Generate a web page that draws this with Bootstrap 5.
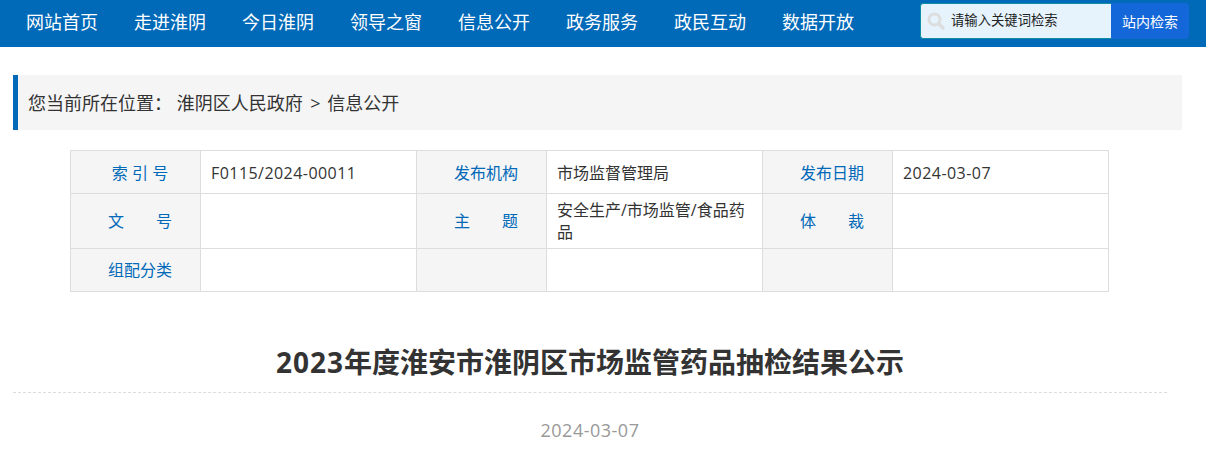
<!DOCTYPE html>
<html lang="zh">
<head>
<meta charset="utf-8">
<title>2023年度淮安市淮阴区市场监管药品抽检结果公示</title>
<link href="https://cdn.jsdelivr.net/npm/bootstrap@5.3.0/dist/css/bootstrap.min.css" rel="stylesheet">
<style>
body { font-family: "Open Sans", "Noto Sans CJK SC", sans-serif; background: #fff; color: #333; overflow: hidden; }
.top-bar { height: 47px; background: #0069b8; padding-left: 26px; padding-right: 17px; }
.top-links { gap: 36px; }
.top-links a { color: #fff; font-size: 18px; line-height: 45px; text-decoration: none; }
.search-box { width: 269px; height: 36px; margin-top: 3px; }
.search-field { width: 191px; height: 36px; background: #e6f3fd; border: 1px solid #0f8ea5; border-right: 0; border-radius: 3px 0 0 3px; padding-left: 6px; gap: 6px; font-size: 13.33px; color: #222; }
.search-go { width: 78px; height: 36px; padding: 0; background: #1467d8; border: 0; border-radius: 0 4px 4px 0; color: #fff; font-size: 14px; }
.crumb-bar { margin: 28px 24px 0 13px; height: 55px; background: #f5f5f5; border-left: 5px solid #0069b8; padding-left: 10px; font-size: 18px; line-height: 56px; color: #333; }
.crumb-sep { margin: 0 2px 0 3px; }
.meta-wrap { margin: 20px 98px 0 70px; }
.meta-grid { table-layout: fixed; width: 1038px; border-collapse: collapse; font-size: 16px; line-height: 22px; }
.meta-grid td { border: 1px solid #ddd; padding: 0 10px; color: #333; vertical-align: middle; }
.meta-grid .r1 td, .meta-grid .r3 td { height: 43px; }
.meta-grid .r1 td { padding-top: 1px; }
.meta-grid .r2 td { height: 55px; }
.meta-grid td.lab { background: #f5f5f5; color: #0069b8; text-align: center; white-space: pre; padding-left: 9px; padding-right: 0; }
.meta-grid td.num-val { letter-spacing: .45px; }
.doc-title { margin: 50px 39px 0 13px; padding-bottom: 10px; border-bottom: 1px dashed #ddd; font-size: 28px; line-height: 40px; font-weight: 700; color: #333; text-align: center; }
.yr { letter-spacing: 1px; }
.doc-date { margin: 25px 39px 0 13px; font-size: 18px; line-height: 24px; color: #999; text-align: center; letter-spacing: .5px; }
</style>
</head>
<body>
<div class="top-bar d-flex justify-content-between">
  <div class="top-links d-flex">
    <a href="#">网站首页</a><a href="#">走进淮阴</a><a href="#">今日淮阴</a><a href="#">领导之窗</a><a href="#">信息公开</a><a href="#">政务服务</a><a href="#">政民互动</a><a href="#">数据开放</a>
  </div>
  <div class="search-box d-flex">
    <div class="search-field d-flex align-items-center">
      <svg width="18" height="18" viewBox="0 0 18 18" aria-hidden="true"><circle cx="7.5" cy="7.5" r="5.5" fill="none" stroke="#ddd" stroke-width="3"/><path d="M11.5 11.5 16 16" stroke="#ddd" stroke-width="3.4" stroke-linecap="round"/></svg>
      <span>请输入关键词检索</span>
    </div>
    <button class="search-go btn" type="button">站内检索</button>
  </div>
</div>
<div class="crumb-bar">您当前所在位置： 淮阴区人民政府 <span class="crumb-sep">&gt;</span> 信息公开</div>
<div class="meta-wrap">
  <table class="meta-grid">
    <colgroup><col style="width:130px"><col style="width:216px"><col style="width:130px"><col style="width:216px"><col style="width:130px"><col style="width:216px"></colgroup>
    <tr class="r1"><td class="lab">索 引 号</td><td class="num-val">F0115/2024-00011</td><td class="lab">发布机构</td><td>市场监督管理局</td><td class="lab">发布日期</td><td class="num-val">2024-03-07</td></tr>
    <tr class="r2"><td class="lab">文　　号</td><td></td><td class="lab">主　　题</td><td>安全生产/市场监管/食品药品</td><td class="lab">体　　裁</td><td></td></tr>
    <tr class="r3"><td class="lab">组配分类</td><td></td><td class="lab"></td><td></td><td class="lab"></td><td></td></tr>
  </table>
</div>
<h1 class="doc-title"><span class="yr">2023</span>年度淮安市淮阴区市场监管药品抽检结果公示</h1>
<div class="doc-date">2024-03-07</div>
<script src="https://cdn.jsdelivr.net/npm/bootstrap@5.3.0/dist/js/bootstrap.bundle.min.js"></script>
</body>
</html>
